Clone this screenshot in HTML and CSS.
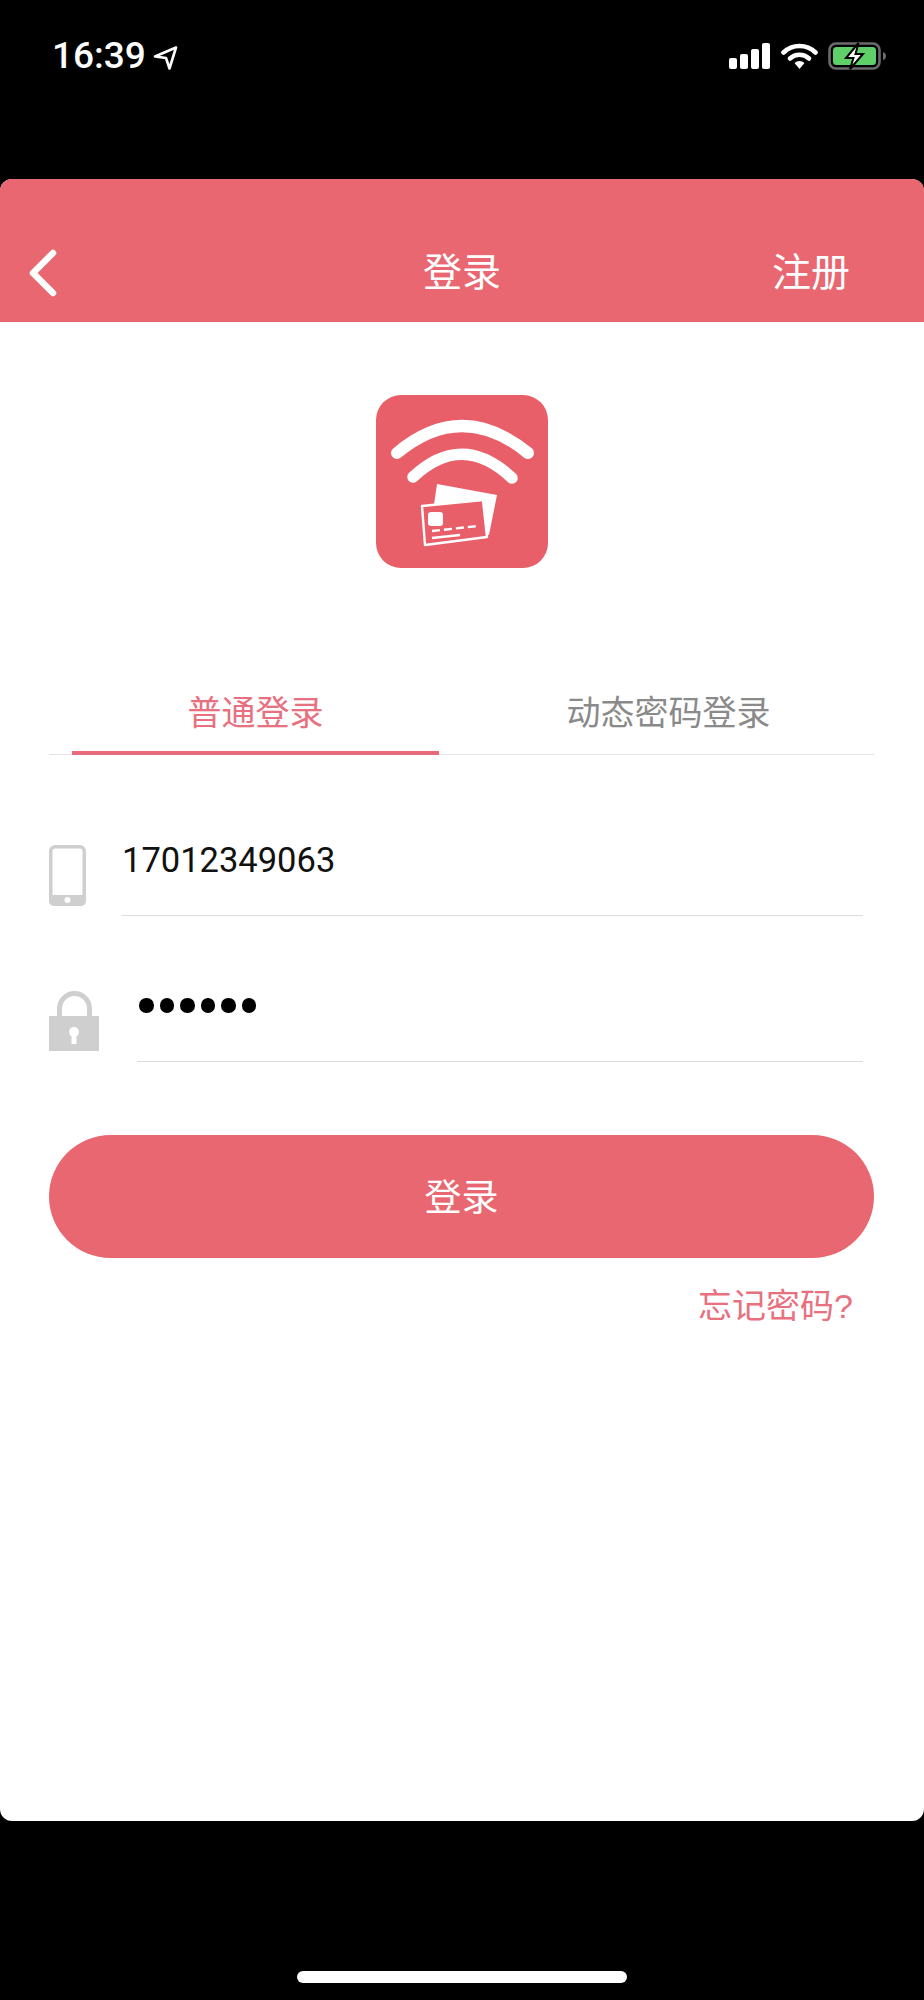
FILE: index.html
```html
<!DOCTYPE html>
<html lang="zh-CN">
<head>
    <meta charset="UTF-8">
    <meta name="viewport" content="width=device-width, initial-scale=1.0">
    <title>登录</title>
    <link rel="stylesheet" href="styles.css">
</head>
<body>
    <!-- Status bar -->
    <div class="status-bar">
        <div class="status-left">
            <span class="clock">16:39</span>
            <svg class="locate-icon" width="25" height="24" viewBox="0 0 25 24">
                <path d="M23 1.5 L2 10.5 L13 12 L16.5 22.5 Z" fill="none" stroke="#fff" stroke-width="2.6" stroke-linejoin="round"/>
            </svg>
        </div>
        <div class="status-right">
            <svg width="42" height="26" viewBox="0 0 42 26">
                <rect x="0" y="15" width="8" height="11" rx="2" fill="#fff"/>
                <rect x="11" y="11" width="8" height="15" rx="2" fill="#fff"/>
                <rect x="22" y="6" width="8" height="20" rx="2" fill="#fff"/>
                <rect x="33" y="0" width="8" height="26" rx="2" fill="#fff"/>
            </svg>
            <svg width="37" height="26" viewBox="0 0 37 26">
                <path d="M2.5 9.5 A23 23 0 0 1 34.5 9.5" fill="none" stroke="#fff" stroke-width="4.6" stroke-linecap="round"/>
                <path d="M9 15.5 A14 14 0 0 1 28 15.5" fill="none" stroke="#fff" stroke-width="4.6" stroke-linecap="round"/>
                <path d="M13.5 20 L18.5 26 L23.5 20 A7.5 7.5 0 0 0 13.5 20 Z" fill="#fff"/>
            </svg>
            <svg width="68" height="28" viewBox="0 0 68 28">
                <rect x="1.5" y="1.5" width="50" height="25" rx="6.5" fill="none" stroke="#6b6b6b" stroke-width="2.6"/>
                <rect x="5" y="5" width="43" height="18" rx="3.5" fill="#5fd068"/>
                <path d="M55 10 Q58 11 58 14 Q58 17 55 18 Z" fill="#6b6b6b"/>
                <path d="M30.5 1 L18 16 H25.5 L22 27 L35 12 H27.5 Z" fill="#fff" stroke="#000" stroke-width="2"/>
            </svg>
        </div>
    </div>

    <!-- App screen -->
    <div class="screen">
        <div class="top-bar">
            <svg class="back-icon" width="30" height="48" viewBox="0 0 30 48">
                <path d="M25 4 L5 24 L25 44" fill="none" stroke="#fff" stroke-width="6.5" stroke-linecap="round" stroke-linejoin="round"/>
            </svg>
            <span class="top-title">登录</span>
            <a class="top-link">注册</a>
        </div>

        <div class="logo-wrap">
            <svg class="logo" width="172" height="173" viewBox="0 0 172 173">
                <rect width="172" height="173" rx="25" fill="#e95f69"/>
                <path d="M21 58 Q86 4 152 58" fill="none" stroke="#fff" stroke-width="12" stroke-linecap="round"/>
                <path d="M37 82 Q86 36 136 83" fill="none" stroke="#fff" stroke-width="11.5" stroke-linecap="round"/>
                <path d="M61 89 L121 100 L113 140 L55 130 Z" fill="#fff"/>
                <path d="M46 111 L107 105 L111 142 L49 150 Z" fill="#e95f69" stroke="#fff" stroke-width="2.4" stroke-linejoin="round"/>
                <rect x="52" y="117" width="15" height="14" rx="3" fill="#fff"/>
                <path d="M56 136 L102 131" fill="none" stroke="#fff" stroke-width="2.4" stroke-dasharray="8 4"/>
                <path d="M56 143 L84 140" fill="none" stroke="#fff" stroke-width="2.4"/>
            </svg>
        </div>

        <div class="tabs">
            <div class="tab active">普通登录</div>
            <div class="tab">动态密码登录</div>
        </div>

        <div class="form-row phone-row">
            <svg width="37" height="61" viewBox="0 0 37 61">
                <rect x="1.75" y="1.75" width="33.5" height="57.5" rx="4.5" fill="none" stroke="#cfcfcf" stroke-width="3.5"/>
                <path d="M0 50 H37 V56 A5 5 0 0 1 32 61 H5 A5 5 0 0 1 0 56 Z" fill="#cfcfcf"/>
                <circle cx="18.5" cy="55" r="3" fill="#fff"/>
            </svg>
            <div class="field">17012349063</div>
        </div>

        <div class="form-row lock-row">
            <svg width="50" height="60" viewBox="0 0 50 60">
                <path d="M10.5 26 V17.5 A15 15 0 0 1 40.5 17.5 V26" fill="none" stroke="#cfcfcf" stroke-width="5"/>
                <rect x="0" y="25" width="50" height="35" fill="#cfcfcf"/>
                <circle cx="25" cy="41" r="5" fill="#fff"/>
                <rect x="22.5" y="41" width="5" height="12" fill="#fff"/>
            </svg>
            <div class="field">
                <div class="dots">
                    <span></span><span></span><span></span><span></span><span></span><span></span>
                </div>
            </div>
        </div>

        <button class="login-btn">登录</button>
        <div class="forgot"><a>忘记密码?</a></div>
    </div>

    <!-- Home indicator -->
    <div class="home-area">
        <div class="home-bar"></div>
    </div>
</body>
</html>
```

FILE: styles.css
```css
/* Page */
body {
    margin: 0;
    width: 924px;
    height: 2000px;
    overflow: hidden;
    background-color: #000;
    font-family: "Liberation Sans", "Noto Sans CJK SC", sans-serif;
}

/* Status bar */
.status-bar {
    height: 179px;
    box-sizing: border-box;
    padding: 41px 28px 0 52px;
    display: flex;
    justify-content: space-between;
    align-items: flex-start;
    color: #fff;
}
.status-left {
    display: flex;
    align-items: center;
    gap: 7px;
}
.clock {
    font-family: Roboto, sans-serif;
    font-weight: 500;
    font-size: 37px;
    line-height: 30px;
}
.locate-icon {
    margin-top: 3px;
}
.status-right {
    display: flex;
    align-items: center;
    gap: 10px;
    margin-top: 1px;
}

/* App screen */
.screen {
    height: 1642px;
    background-color: #fff;
    border-radius: 12px;
    overflow: hidden;
}
.top-bar {
    height: 143px;
    box-sizing: border-box;
    padding: 67px 28px 0;
    display: grid;
    grid-template-columns: 1fr auto 1fr;
    align-items: start;
    background-color: #e96770;
    color: #fff;
    font-size: 39px;
    line-height: 54px;
}
.top-link {
    justify-self: end;
    margin-right: 46px;
}
.back-icon {
    margin-top: 3px;
}
.logo-wrap {
    display: flex;
    justify-content: center;
    padding-top: 73px;
}

/* Tabs */
.tabs {
    display: flex;
    margin: 107px 50px 0 49px;
    padding-left: 23px;
    border-bottom: 1px solid #e4e4e4;
}
.tab {
    flex: 1;
    height: 77px;
    line-height: 76px;
    padding-left: 24px;
    text-align: center;
    font-size: 34px;
    color: #8a8a8a;
}
.tab.active {
    flex: 0 0 367px;
    padding-left: 0;
    height: 76px;
    margin-bottom: -1px;
    color: #e8707f;
    border-bottom: 4px solid #e8697a;
}

/* Form rows */
.form-row {
    display: flex;
    align-items: flex-start;
    margin: 0 61px 0 49px;
}
.phone-row {
    margin-top: 90px;
}
.lock-row {
    margin-top: 75px;
}
.field {
    flex: 1;
    height: 70px;
    border-bottom: 1px solid #dcdcdc;
    font-family: Roboto, sans-serif;
    font-size: 34.5px;
    line-height: 30px;
    color: #111;
}
.phone-row .field {
    margin-left: 36px;
}
.lock-row .field {
    margin-left: 38px;
    padding-left: 2px;
}
.dots {
    display: flex;
    gap: 6px;
    padding-top: 7px;
}
.dots span {
    width: 14.5px;
    height: 14.5px;
    border-radius: 50%;
    background-color: #000;
}

/* Login button */
.login-btn {
    display: block;
    width: 825px;
    height: 123px;
    margin: 73px 0 0 49px;
    padding: 0 0 4px;
    border: none;
    border-radius: 62px;
    background-color: #e96770;
    color: #fff;
    font-family: inherit;
    font-size: 37px;
}
.forgot {
    margin-top: 28px;
    padding-right: 71px;
    text-align: right;
    font-size: 34px;
    line-height: 40px;
    color: #e8707f;
}

/* Home indicator */
.home-area {
    padding-top: 150px;
}
.home-bar {
    width: 330px;
    height: 12px;
    margin: 0 auto;
    border-radius: 6px;
    background-color: #fff;
}
```
